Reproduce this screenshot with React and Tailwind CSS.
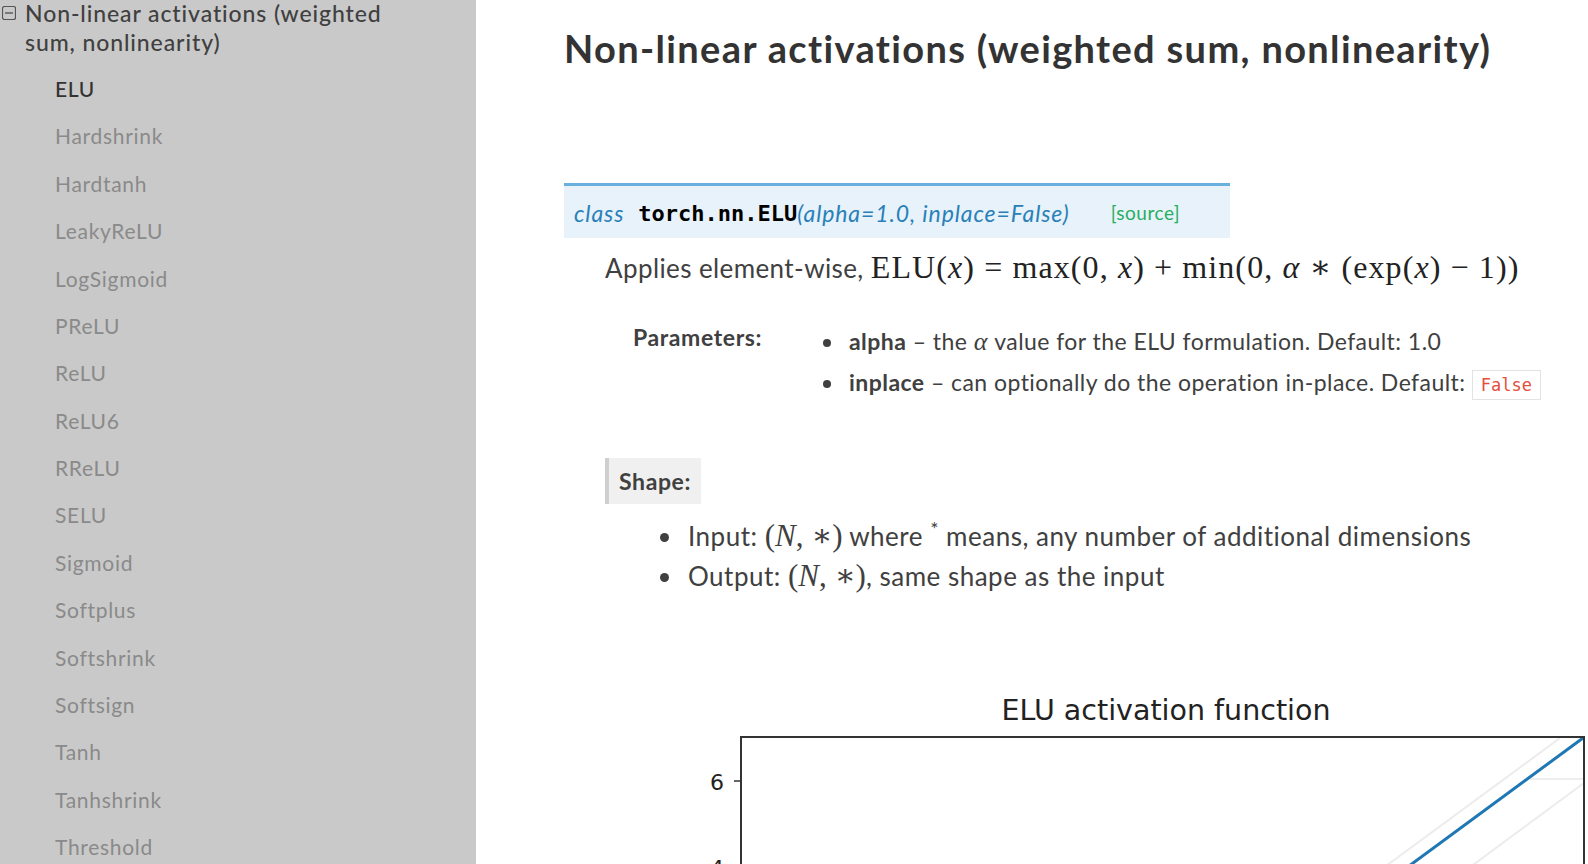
import React from 'react';

const items = [
  'ELU', 'Hardshrink', 'Hardtanh', 'LeakyReLU', 'LogSigmoid', 'PReLU', 'ReLU', 'ReLU6',
  'RReLU', 'SELU', 'Sigmoid', 'Softplus', 'Softshrink', 'Softsign', 'Tanh', 'Tanhshrink', 'Threshold',
];

const lato = { fontFamily: 'Lato, "Open Sans", sans-serif' };
const serif = { fontFamily: '"Liberation Serif", "DejaVu Serif", serif' };
const mono = { fontFamily: '"DejaVu Sans Mono", monospace' };

function Sidebar() {
  return (
    <div className="w-[476px] shrink-0 h-[864px] overflow-hidden bg-[#c9c9c9] text-[#404040]" style={lato}>
      <div className="flex items-start pl-[2px]">
        <svg width="14" height="14" viewBox="0 0 14 14" className="mt-[6px] mr-[9px] shrink-0">
          <rect x="0.5" y="0.5" width="13" height="13" rx="2" fill="none" stroke="#555" strokeWidth="1.2" />
          <line x1="3" y1="7" x2="11" y2="7" stroke="#555" strokeWidth="1.4" />
        </svg>
        <div className="text-[23px] leading-[29px] font-medium tracking-[0.9px] -mt-[1px]">
          Non-linear activations (weighted<br />sum, nonlinearity)
        </div>
      </div>
      <ul className="mt-[8px]">
        {items.map((it, i) => (
          <li
            key={it}
            className={
              'pl-[55px] h-[47.4px] flex items-center text-[21px] tracking-[0.7px] ' +
              (i === 0 ? 'text-[#333] font-medium' : 'text-[#8a8a8a]')
            }
          >
            {it}
          </li>
        ))}
      </ul>
    </div>
  );
}

function Chart() {
  return (
    <div className="ml-[126px] mt-[97px] w-[898px]">
      <div
        className="text-center text-[28.5px] text-[#222] pl-[54px] leading-[36px]"
        style={{ fontFamily: '"DejaVu Sans", sans-serif' }}
      >
        ELU activation function
      </div>
      <svg width="898" height="140" viewBox="0 0 898 140" className="block mt-[7px]">
        <line x1="870" y1="2" x2="677" y2="144" stroke="#ececec" strokeWidth="2" />
        <line x1="894" y1="47" x2="764" y2="143" stroke="#ececec" strokeWidth="2" />
        <line x1="840" y1="43" x2="894" y2="43" stroke="#eeeeee" strokeWidth="2" />
        <line x1="893" y1="2" x2="700" y2="144" stroke="#1f77b4" strokeWidth="3" />
        <rect x="51" y="1" width="843" height="160" fill="none" stroke="#333" strokeWidth="2" />
        <line x1="44" y1="45" x2="51" y2="45" stroke="#333" strokeWidth="1.5" />
        <text x="27" y="54" textAnchor="middle" fontSize="22" fill="#222" fontFamily="DejaVu Sans, sans-serif">6</text>
        <text x="27" y="140" textAnchor="middle" fontSize="22" fill="#222" fontFamily="DejaVu Sans, sans-serif">4</text>
      </svg>
    </div>
  );
}

export default function App() {
  return (
    <div className="flex w-[1588px] h-[864px] overflow-hidden bg-white">
      <Sidebar />
      <div className="flex-1 pl-[88px] text-[#404040]" style={lato}>
        <h1 className="text-[38px] font-bold tracking-[1.35px] leading-[44px] mt-[26px] text-[#333]">
          Non-linear activations (weighted sum, nonlinearity)
        </h1>

        <div className="mt-[113px] w-[666px] h-[55px] border-t-[3px] border-[#6ab0de] bg-[#e7f2fa] flex items-center pl-[10px] pt-[3px] text-[23px] tracking-[0.9px]">
          <em className="text-[#2980b9]">class</em>
          <span className="ml-[14px] font-bold text-black text-[22px] tracking-normal" style={mono}>
            torch.nn.ELU
          </span>
          <em className="text-[#2980b9]">(alpha=1.0, inplace=False)</em>
          <span className="ml-[41px] text-[#27ae60] text-[19px] tracking-[0.5px]">[source]</span>
        </div>

        <div className="pl-[41px]">
          <p className="mt-[11px] text-[26px] tracking-[0.4px] leading-[36px] flex items-baseline">
            <span>Applies element-wise,&nbsp;</span>
            <span className="text-[32px] tracking-[1.1px] text-[#222]" style={serif}>
              ELU(<i>x</i>) = max(0, <i>x</i>) + min(0, <i>α</i> ∗ (exp(<i>x</i>) − 1))
            </span>
          </p>

          <div className="flex mt-[35px] text-[23px] tracking-[0.45px] leading-[40px]">
            <div className="w-[190px] pl-[28px] font-bold -mt-[4px] tracking-[0.6px]">Parameters:</div>
            <ul className="list-disc pl-[50px]">
              <li className="pl-[4px]">
                <b>alpha</b> – the <i style={serif} className="text-[26px]">α</i> value for the ELU formulation. Default: 1.0
              </li>
              <li className="pl-[4px]">
                <b>inplace</b> – can optionally do the operation in-place. Default:{' '}
                <code
                  className="inline-block border border-[#e1e4e5] bg-white text-[#e74c3c] text-[17px] tracking-normal leading-[28px] px-[8px] align-middle"
                  style={mono}
                >
                  False
                </code>
              </li>
            </ul>
          </div>

          <div className="mt-[56px] inline-block bg-[#f0f0f0] border-l-[4px] border-[#cfcfcf] px-[10px] h-[46px] leading-[46px] text-[23px] tracking-[0.6px] font-bold">
            Shape:
          </div>

          <ul className="list-disc pl-[79px] mt-[12px] text-[26px] tracking-[0.5px] leading-[40px]">
            <li className="pl-[4px]">
              Input: <span style={serif} className="text-[31px] tracking-normal">(<i>N</i>, ∗)</span> where <sup>*</sup> means, any number of additional dimensions
            </li>
            <li className="pl-[4px]">
              Output: <span style={serif} className="text-[31px] tracking-normal">(<i>N</i>, ∗)</span>, same shape as the input
            </li>
          </ul>
        </div>

        <Chart />
      </div>
    </div>
  );
}
